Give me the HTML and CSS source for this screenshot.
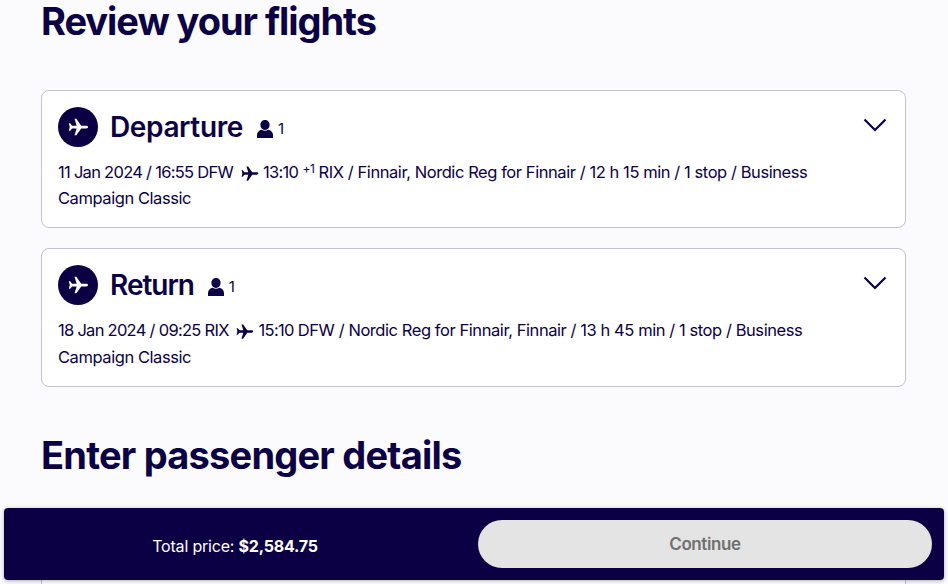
FILE: index.html
```html
<!DOCTYPE html>
<html lang="en">
<head>
<meta charset="utf-8">
<title>Review your flights</title>
<link rel="stylesheet" href="styles.css">
</head>
<body>
<svg class="defs" width="0" height="0" aria-hidden="true">
  <symbol id="plane" viewBox="0 0 24 24"><path d="M23 12c0-.9-.9-1.500-2-1.500h-5.500L10.200 3H8.200l2.300 7.500H5.500L3.500 8H2l1 4-1 4h1.500l2-2.500h5L8.200 21h2l5.300-7.500H21c1.100 0 2-.6 2-1.500z"/></symbol>
  <symbol id="person" viewBox="0 0 16 18"><path d="M8 0c2.700 0 4.600 2.100 4.600 4.800 0 2.800-1.900 5.200-4.600 5.200S3.400 7.600 3.400 4.800C3.400 2.100 5.300 0 8 0zM0 18v-3.200c0-2.700 2.300-4.500 4.800-5 1.800 1.200 4.600 1.200 6.400 0 2.500.5 4.800 2.300 4.800 5V18z"/></symbol>
</svg>
<main class="page">
  <h1 class="title title-first">Review your flights</h1>
  <section class="card">
    <div class="card-head">
      <span class="badge"><svg class="badge-icon"><use href="#plane"/></svg></span>
      <h2 class="card-title card-title-dep">Departure</h2>
      <span class="pax"><svg class="pax-icon"><use href="#person"/></svg>1</span>
      <svg class="chevron" viewBox="0 0 24 14"><path d="M1.500 1.500L12 12 22.500 1.500"/></svg>
    </div>
    <p class="details"><span class="tight">11 Jan 2024 / 16:55 DFW</span> <svg class="inline-plane"><use href="#plane"/></svg> <span class="tight">13:10</span> <sup class="plus">+1</sup> RIX / Finnair, Nordic Reg for Finnair / 12 h 15 min / 1 stop / Business Campaign Classic</p>
  </section>
  <section class="card">
    <div class="card-head">
      <span class="badge"><svg class="badge-icon"><use href="#plane"/></svg></span>
      <h2 class="card-title card-title-ret">Return</h2>
      <span class="pax"><svg class="pax-icon"><use href="#person"/></svg>1</span>
      <svg class="chevron" viewBox="0 0 24 14"><path d="M1.500 1.500L12 12 22.500 1.500"/></svg>
    </div>
    <p class="details"><span class="tight">18 Jan 2024 / 09:25 RIX</span> <svg class="inline-plane"><use href="#plane"/></svg> <span class="tight">15:10</span> DFW / Nordic Reg for Finnair, Finnair / 13 h 45 min / 1 stop / Business Campaign Classic</p>
  </section>
  <h1 class="title title-second">Enter passenger details</h1>
  <section class="card card-next"></section>
</main>
<footer class="bar">
  <div class="total">Total price: <strong>$2,584.75</strong></div>
  <button class="continue" type="button" disabled>Continue</button>
</footer>
</body>
</html>
```
FILE: styles.css
```css
html, body { margin: 0; height: 100%; overflow: hidden; }
body { background: #fbfbfd; color: #0c0044; font-family: "Inter", "Noto Sans", sans-serif; position: relative; }
.defs { position: absolute; }
.page { padding: 0 42px 0 41px; }
.title { margin: 0; font-size: 38px; line-height: 42px; font-weight: 700; }
.title-first { padding-bottom: 48px; letter-spacing: -1.05px; }
.title-second { margin-top: 47.700px; letter-spacing: -0.78px; }
.card { background: #fff; border: 1px solid #c3c1d1; border-radius: 8px; padding: 16px; margin-bottom: 20px; height: 104.400px; }
.card-head { display: flex; align-items: center; height: 40px; }
.badge { width: 40px; height: 40px; border-radius: 50%; background: #0c0044; display: flex; align-items: center; justify-content: center; flex: none; }
.badge-icon { width: 22px; height: 22px; fill: #fff; }
.card-title { margin: 0 0 0 12px; font-size: 28px; line-height: 40px; font-weight: 600; }
.card-title-dep { letter-spacing: -0.37px; }
.card-title-ret { letter-spacing: -1.03px; }
.pax { display: flex; align-items: center; margin-left: 14px; font-size: 15px; margin-top: 3px; }
.pax-icon { width: 16px; height: 18px; fill: #0c0044; margin-right: 5px; }
.chevron { width: 24px; height: 14px; margin-left: auto; margin-right: 2px; margin-top: -4px; fill: none; stroke: #0c0044; stroke-width: 2.200; }
.details { margin: 12px 0 0; font-size: 16.500px; line-height: 26.400px; letter-spacing: -0.43px; font-weight: 400; max-width: 780px; }
.tight { letter-spacing: -0.72px; }
.inline-plane { width: 19px; height: 19px; fill: #0c0044; vertical-align: -5px; margin-left: 2.500px; }
.plus { font-size: 12px; line-height: 0; vertical-align: 5px; }
.card-next { margin-top: 48px; }
.bar { position: absolute; left: 4px; top: 508px; width: 940px; height: 72px; background: #0c0044; border-radius: 4px; display: flex; align-items: center; box-shadow: 0 1px 4px rgba(0,0,0,.3); }
.total { width: 474px; flex: none; padding: 4px 12px 0 0; text-align: center; color: #fff; font-size: 16px; letter-spacing: -0.2px; box-sizing: border-box; }
.total strong { font-weight: 700; }
.continue { width: 454px; height: 48px; border: 0; border-radius: 24px; background: #e4e4e4; color: #707070; font: 600 17px "Inter", "Noto Sans", sans-serif; letter-spacing: -0.4px; }
```
